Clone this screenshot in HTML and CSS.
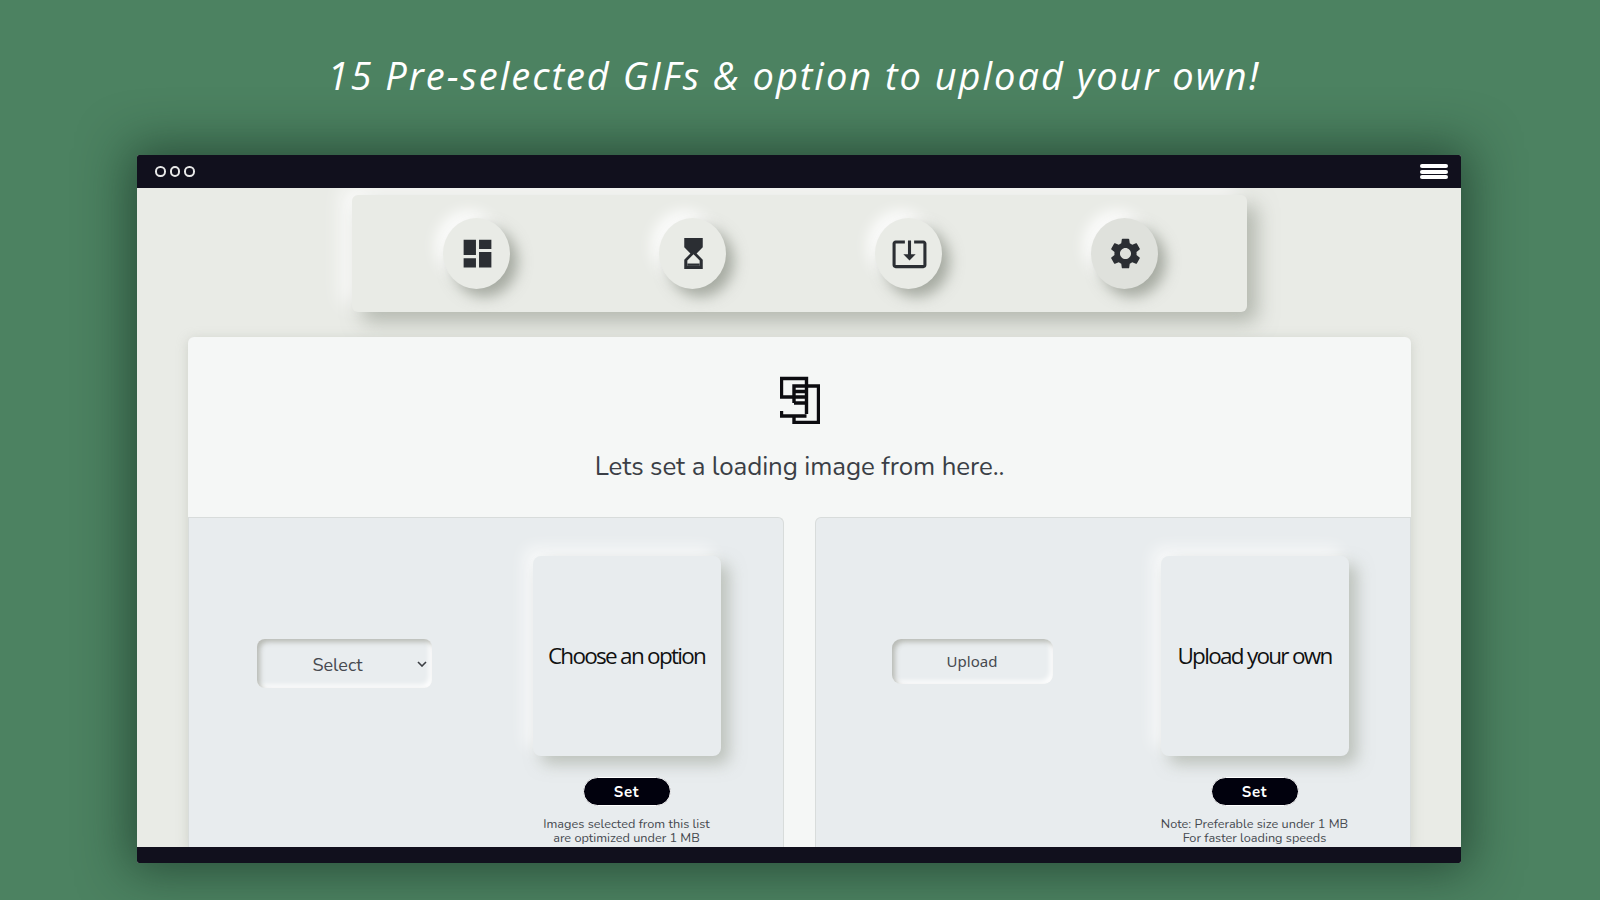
FILE: index.html
```html
<!DOCTYPE html>
<html lang="en">
<head>
<meta charset="utf-8">
<title>Loading image</title>
<link rel="stylesheet" href="styles.css">
</head>
<body>
<h1 class="promo">15 Pre-selected GIFs &amp; option to upload your own!</h1>
<div class="window">
  <div class="titlebar">
    <div class="dots"><i></i><i></i><i></i></div>
    <div class="burger"><i></i><i></i><i></i></div>
  </div>
  <div class="content">
    <nav class="toolbar">
      <button class="round"><svg viewBox="0 0 24 24"><path d="M3 13h8V3H3v10zm0 8h8v-6H3v6zm10 0h8V11h-8v10zm0-18v6h8V3h-8z"/></svg></button>
      <button class="round"><svg viewBox="0 0 24 24"><path d="M6 2l.01 6L10 12l-3.99 4.01L6 22h12v-6l-4-4 4-3.99V2H6zm10 14.5V20H8v-3.5l4-4 4 4z"/><path d="M8 18.5h8V20H8z"/></svg></button>
      <button class="round"><svg viewBox="0 0 24 24"><path d="M12 16.5l4-4h-3v-9h-2v9H8l4 4zm9-13h-6v1.99h6v14.03H3V5.49h6V3.5H3c-1.1 0-2 .9-2 2v14c0 1.1.9 2 2 2h18c1.1 0 2-.9 2-2v-14c0-1.1-.9-2-2-2z"/></svg></button>
      <button class="round active"><svg viewBox="0 0 24 24"><path d="M19.14 12.94c.04-.3.06-.61.06-.94 0-.32-.02-.64-.07-.94l2.03-1.58c.18-.14.23-.41.12-.61l-1.92-3.32c-.12-.22-.37-.29-.59-.22l-2.39.96c-.5-.38-1.03-.7-1.62-.94l-.36-2.54c-.04-.24-.24-.41-.48-.41h-3.84c-.24 0-.43.17-.47.41l-.36 2.54c-.59.24-1.13.57-1.62.94l-2.39-.96c-.22-.08-.47 0-.59.22L2.74 8.87c-.12.21-.08.47.12.61l2.03 1.58c-.05.3-.09.63-.09.94s.02.64.07.94l-2.03 1.58c-.18.14-.23.41-.12.61l1.92 3.32c.12.22.37.29.59.22l2.39-.96c.5.38 1.03.7 1.62.94l.36 2.54c.05.24.24.41.48.41h3.84c.24 0 .44-.17.47-.41l.36-2.54c.59-.24 1.13-.56 1.62-.94l2.39.96c.22.08.47 0 .59-.22l1.92-3.32c.12-.22.07-.47-.12-.61l-2.01-1.58zM12 15.6c-1.98 0-3.6-1.62-3.6-3.6s1.62-3.6 3.6-3.6 3.6 1.62 3.6 3.6-1.62 3.6-3.6 3.6z"/></svg></button>
    </nav>
    <main class="card">
      <header class="card-head">
        <svg class="logo" viewBox="0 0 40 48"><path d="M1.5 1V21H26.5M0 2.5H26.5V38M14 27V10H38.5V46.5H14V41M14 27H26.5M14 15.5H26.5M1.5 35V40H26.5"/></svg>
        <h2>Lets set a loading image from here..</h2>
      </header>
      <div class="panels">
        <section class="panel">
          <div class="control">
            <div class="select"><span>Select</span><svg viewBox="0 0 10 6"><path d="M1 1l4 4 4-4"/></svg></div>
          </div>
          <div class="preview">
            <div class="tile">Choose an option</div>
            <button class="set">Set</button>
            <p class="note">Images selected from this list<br>are optimized under 1 MB</p>
          </div>
        </section>
        <section class="panel">
          <div class="control">
            <div class="upload">Upload</div>
          </div>
          <div class="preview">
            <div class="tile">Upload your own</div>
            <button class="set">Set</button>
            <p class="note">Note: Preferable size under 1 MB<br>For faster loading speeds</p>
          </div>
        </section>
      </div>
    </main>
  </div>
  <div class="footbar"></div>
</div>
</body>
</html>
```
FILE: styles.css
```css
* { box-sizing: border-box; }
html, body { margin: 0; height: 100%; }
body {
  width: 1600px; height: 900px; overflow: hidden;
  background: #4c8261;
  font-family: "Noto Sans", "Open Sans", sans-serif;
  display: flex; flex-direction: column; align-items: center;
  padding-right: 2px;
}
.promo {
  margin: 0; height: 155px; padding: 49px 10px 0 0;
  font: italic 400 38px/52px "Open Sans", sans-serif;
  letter-spacing: 1.98px; color: #fff; text-align: center;
}
.window {
  width: 1324px; height: 708px;
  display: flex; flex-direction: column;
  background: #e9ebe6; border-radius: 2px;
  box-shadow: 0 0 50px 8px rgba(20, 45, 32, .62);
  overflow: hidden;
}
.titlebar {
  height: 33px; flex: none; background: #11101d;
  display: flex; justify-content: space-between; align-items: center;
  padding: 0 0 0 18px;
}
.dots { display: flex; gap: 4px; }
.dots i { width: 10.5px; height: 10.5px; border: 2px solid #e8e8e8; border-radius: 50%; }
.burger { display: flex; flex-direction: column; gap: 1.5px; margin-right: 13px; }
.burger i { width: 28px; height: 4px; background: #fff; border-radius: 2px; }
.content { flex: 1; min-height: 0; overflow: hidden; display: flex; flex-direction: column; align-items: center; }
.toolbar {
  width: 895px; height: 117px; margin-top: 7px; flex: none;
  padding: 23px 89px 0 91px;
  display: flex; justify-content: space-between; align-items: flex-start;
  background: #e9ebe6; border-radius: 6px;
  box-shadow: 10px 10px 20px rgba(160, 165, 155, .75), -10px -8px 20px rgba(255, 255, 255, .9);
}
.round {
  width: 67px; height: 71px; padding: 0 0 0 2px; border: 0; border-radius: 50%;
  background: #e9ebe6; display: flex; align-items: center; justify-content: center;
  box-shadow: 8px 8px 14px rgba(150, 155, 145, .8), -8px -8px 14px rgba(255, 255, 255, .85);
}
.round.active { background: #dfe1dc; }
.round svg { width: 37px; height: 37px; fill: #2b2e33; }
.card {
  width: 1223px; flex: 1; margin-top: 25px; min-height: 0;
  background: #f5f7f6; border-radius: 6px 6px 0 0;
  box-shadow: 0 2px 12px rgba(170, 175, 165, .45);
  display: flex; flex-direction: column;
}
.card-head {
  height: 180px; flex: none;
  display: flex; flex-direction: column; align-items: center;
  padding: 39px 0 0 1px;
}
.logo { width: 40px; height: 48px; fill: none; stroke: #0c0c10; stroke-width: 3.4; }
.card-head h2 {
  margin: 25px 0 0; font: 400 25.9px/36px "Nunito", "Noto Sans", sans-serif;
  color: #3b3f46; letter-spacing: -.1px;
}
.panels { flex: 1; min-height: 0; display: flex; gap: 31px; }
.panel {
  flex: 1; min-width: 0; position: relative;
  background: #e8ecee; border: 1px solid #d8dcdb; border-bottom: 0;
  border-radius: 0 6px 0 0;
  display: flex; overflow: hidden;
}
.panel + .panel { border-radius: 6px 0 0 0; }
.control { width: 344px; flex: none; padding: 121px 0 0 68px; display: flex; align-items: flex-start; }
.panel + .panel .control { width: 345px; padding-left: 76px; }
.select {
  width: 175px; height: 49px; position: relative;
  background: #e9edef; border-radius: 8px;
  display: flex; align-items: center; justify-content: center; padding: 2px 13px 0 0;
  font: 400 18px/1 "Nunito", "Noto Sans", sans-serif; color: #46494f;
  box-shadow: inset 3px 3px 5px rgba(175, 178, 170, .85), inset -3px -3px 5px rgba(255, 255, 255, .95);
}
.select svg { position: absolute; right: 5px; top: 22px; width: 10px; height: 6px; fill: none; stroke: #3c3f44; stroke-width: 1.6; }
.upload {
  width: 161px; height: 45px; padding-bottom: 2px;
  background: #e9edef; border-radius: 9px;
  display: flex; align-items: center; justify-content: center;
  font-size: 15px; color: #46494f;
  box-shadow: inset 3px 3px 5px rgba(175, 178, 170, .85), inset -3px -3px 5px rgba(255, 255, 255, .95);
}
.preview { width: 188px; flex: none; padding-top: 38px; display: flex; flex-direction: column; align-items: center; }
.tile {
  width: 188px; height: 200px; flex: none;
  display: flex; align-items: center; justify-content: center; padding-bottom: 1px;
  background: #e8ecee; border-radius: 8px;
  font: 400 22.5px/30px "Open Sans", sans-serif; letter-spacing: -1.72px; color: #111;
  white-space: nowrap;
  box-shadow: 8px 8px 16px rgba(170, 175, 165, .7), -8px -8px 16px rgba(255, 255, 255, .75);
}
.set {
  width: 88px; height: 29px; margin-top: 21px; flex: none; padding: 1px 0 0;
  border: 1px solid #fff; border-radius: 15px; background: #01010d; color: #fff;
  font: 700 15px/1 "Nunito", "Noto Sans", sans-serif; letter-spacing: .8px;
}
.note {
  margin: 11px -20px 0; text-align: center; white-space: nowrap;
  font: 400 12.7px/14px "Nunito", "Noto Sans", sans-serif; color: #45494f;
}
.footbar { height: 16px; flex: none; background: #11101d; }
```
